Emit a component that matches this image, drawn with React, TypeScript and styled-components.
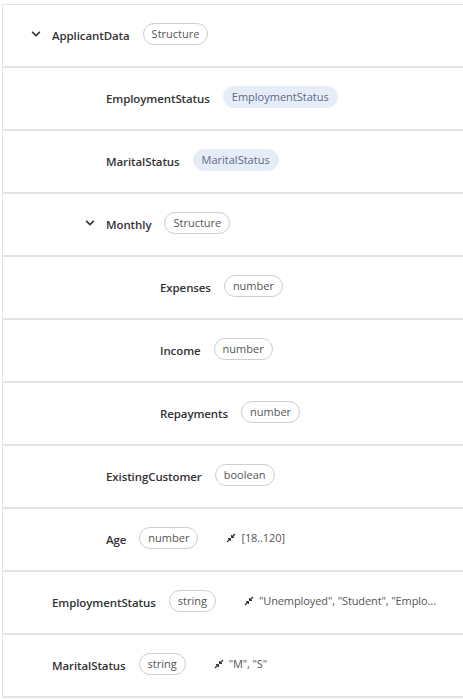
import React, { FC } from 'react';
import styled, { createGlobalStyle } from 'styled-components';
import { FaChevronDown, FaCompressAlt } from 'react-icons/fa';

type Field = {
  name: string;
  type: string;
  level: number;
  expandable?: boolean;
  reference?: boolean;
  constraint?: string;
};

const fields: Field[] = [
  { name: 'ApplicantData', type: 'Structure', level: 0, expandable: true },
  { name: 'EmploymentStatus', type: 'EmploymentStatus', level: 1, reference: true },
  { name: 'MaritalStatus', type: 'MaritalStatus', level: 1, reference: true },
  { name: 'Monthly', type: 'Structure', level: 1, expandable: true },
  { name: 'Expenses', type: 'number', level: 2 },
  { name: 'Income', type: 'number', level: 2 },
  { name: 'Repayments', type: 'number', level: 2 },
  { name: 'ExistingCustomer', type: 'boolean', level: 1 },
  { name: 'Age', type: 'number', level: 1, constraint: '[18..120]' },
  {
    name: 'EmploymentStatus',
    type: 'string',
    level: 0,
    constraint: '"Unemployed", "Student", "Employed", "Self-employed"',
  },
  { name: 'MaritalStatus', type: 'string', level: 0, constraint: '"M", "S"' },
];

const GlobalStyle = createGlobalStyle`
  body {
    margin: 0;
    background: #fff;
    font-family: "Open Sans", "Noto Sans", sans-serif;
  }
`;

const App: FC = () => (
  <>
    <GlobalStyle />
    <Tree>
      {fields.map((f, i) => (
        <Row key={i} $level={f.level}>
          <Toggle>{f.expandable && <FaChevronDown size={10} />}</Toggle>
          <Name>{f.name}</Name>
          <Badge $reference={f.reference}>{f.type}</Badge>
          {f.constraint && (
            <Constraint>
              <FaCompressAlt size={10} />
              <ConstraintText>{f.constraint}</ConstraintText>
            </Constraint>
          )}
        </Row>
      ))}
    </Tree>
  </>
);

export default App;

const Tree = styled.div`
  margin: 4px 0 0 2px;
  border-top: 1px solid #e3e3e3;
  border-left: 1px solid #e3e3e3;
`;

const Row = styled.div<{ $level: number }>`
  height: 61px;
  display: flex;
  align-items: center;
  padding: 0 24px 0 ${(p) => 26 + p.$level * 54}px;
  border-bottom: 2px solid #e3e3e3;
  min-width: 0;
`;

const Toggle = styled.span`
  width: 23px;
  flex: none;
  display: flex;
  align-items: center;
  padding-left: 2px;
  box-sizing: border-box;
  color: #333;
  margin-top: -3px;
`;

const Name = styled.span`
  font-size: 11.5px;
  font-weight: 600;
  letter-spacing: -0.1px;
  color: #333;
  flex: none;
`;

const Badge = styled.span<{ $reference?: boolean }>`
  flex: none;
  margin-left: 13px;
  height: 20px;
  padding: 0 8px;
  display: inline-flex;
  align-items: center;
  border-radius: 11px;
  font-size: 11px;
  margin-top: -4px;
  color: ${(p) => (p.$reference ? '#5b6b86' : '#555')};
  background: ${(p) => (p.$reference ? '#e6edf8' : '#fff')};
  border: 1px solid ${(p) => (p.$reference ? '#e6edf8' : '#cfcfcf')};
`;

const Constraint = styled.span`
  display: flex;
  align-items: center;
  margin-left: 28px;
  min-width: 0;
  margin-top: -4px;
  color: #333;
  svg {
    flex: none;
  }
`;

const ConstraintText = styled.span`
  margin-left: 5px;
  font-size: 11px;
  letter-spacing: -0.1px;
  color: #555;
  white-space: nowrap;
  overflow: hidden;
  text-overflow: ellipsis;
`;
